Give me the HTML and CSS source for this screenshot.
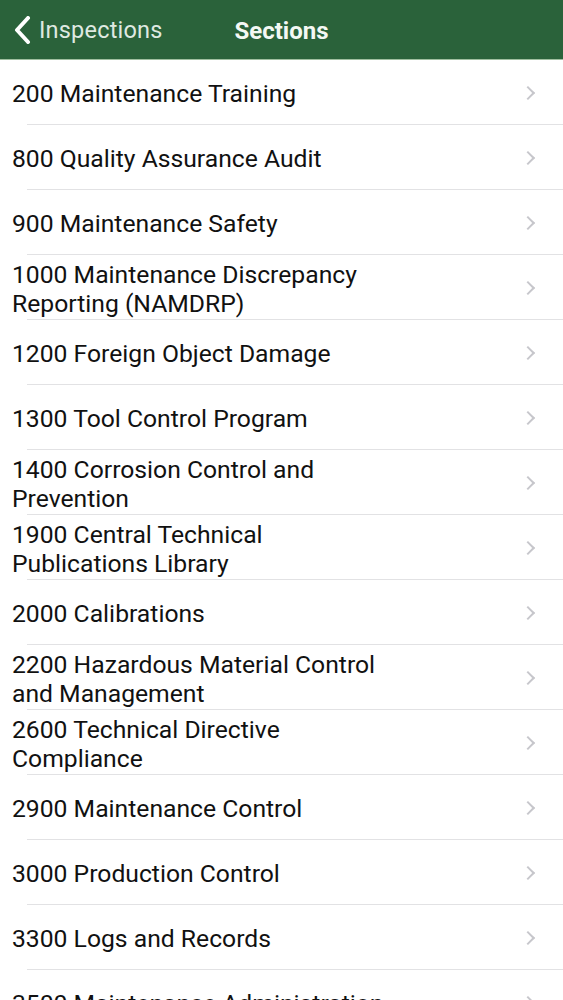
FILE: index.html
```html
<!DOCTYPE html>
<html>
<head>
<meta charset="utf-8">
<link rel="stylesheet" href="styles.css">
</head>
<body>
<header class="nav">
  <a class="back">
    <svg class="back-icon" width="20" height="28" viewBox="0 0 20 28"><path d="M15 2 L4 14 L15 26" fill="none" stroke="#ffffff" stroke-width="4" stroke-linecap="round" stroke-linejoin="round"/></svg>
    <span class="back-label">Inspections</span>
  </a>
  <h1 class="title">Sections</h1>
</header>
<ul class="list">
  <li class="row"><span class="label">200 Maintenance Training</span><span class="chev"></span></li>
  <li class="row"><span class="label">800 Quality Assurance Audit</span><span class="chev"></span></li>
  <li class="row"><span class="label">900 Maintenance Safety</span><span class="chev"></span></li>
  <li class="row"><span class="label">1000 Maintenance Discrepancy Reporting (NAMDRP)</span><span class="chev"></span></li>
  <li class="row"><span class="label">1200 Foreign Object Damage</span><span class="chev"></span></li>
  <li class="row"><span class="label">1300 Tool Control Program</span><span class="chev"></span></li>
  <li class="row"><span class="label">1400 Corrosion Control and Prevention</span><span class="chev"></span></li>
  <li class="row"><span class="label">1900 Central Technical Publications Library</span><span class="chev"></span></li>
  <li class="row"><span class="label">2000 Calibrations</span><span class="chev"></span></li>
  <li class="row"><span class="label">2200 Hazardous Material Control and Management</span><span class="chev"></span></li>
  <li class="row"><span class="label">2600 Technical Directive Compliance</span><span class="chev"></span></li>
  <li class="row"><span class="label">2900 Maintenance Control</span><span class="chev"></span></li>
  <li class="row"><span class="label">3000 Production Control</span><span class="chev"></span></li>
  <li class="row"><span class="label">3300 Logs and Records</span><span class="chev"></span></li>
  <li class="row"><span class="label">3500 Maintenance Administration</span><span class="chev"></span></li>
</ul>
</body>
</html>
```
FILE: styles.css
```css
* { box-sizing: border-box; }
html, body { margin: 0; padding: 0; background: #ffffff; }
body { font-family: Roboto, "Liberation Sans", sans-serif; color: #111111; overflow: hidden; }

.nav {
  height: 60px;
  background: #2a623a;
  display: flex;
  align-items: center;
  position: relative;
  border-bottom: 1px solid #9fbf9f;
}
.back {
  display: flex;
  align-items: center;
  padding-left: 13px;
  color: #dfe9e1;
}
.back-icon { display: block; margin-right: 6px; }
.back-label { font-size: 23.5px; letter-spacing: 0.2px; }
.title {
  position: absolute;
  left: 0; right: 0;
  text-align: center;
  margin: 0;
  font-size: 24px;
  font-weight: 700;
  color: #f4f8f4;
  pointer-events: none;
  padding-top: 2px;
}

.list { list-style: none; margin: 0; padding: 0; }
.row {
  height: 65px;
  display: flex;
  align-items: center;
  justify-content: space-between;
  padding-left: 12px;
  padding-right: 30px;
  position: relative;
}
.row::after {
  content: "";
  position: absolute;
  left: 27px; right: 0; bottom: 0;
  height: 1px;
  background: #e2e2e4;
}
.label {
  font-size: 24.7px;
  line-height: 29px;
  max-width: 385px;
  padding-top: 2px;
}
.chev {
  width: 10px;
  height: 10px;
  border-top: 2px solid #c7c7cc;
  border-right: 2px solid #c7c7cc;
  transform: rotate(45deg);
}
```
